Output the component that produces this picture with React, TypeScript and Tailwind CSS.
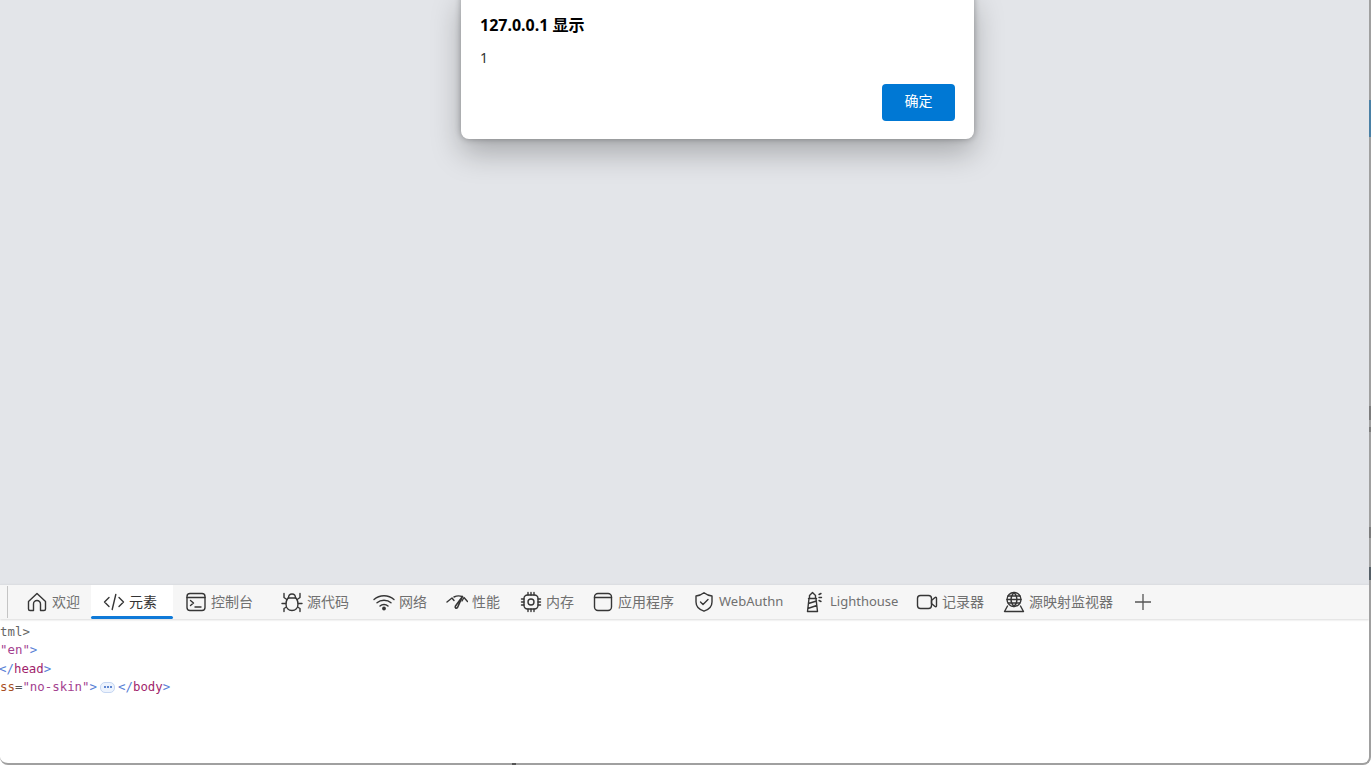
import type { ReactNode } from 'react';

const ink = { fill: 'none', stroke: '#363636', strokeWidth: 1.4, strokeLinecap: 'round', strokeLinejoin: 'round' } as const;

function Icon({ children }: { children: ReactNode }) {
  return (
    <svg width="22" height="22" viewBox="0 0 22 22" className="shrink-0" {...ink}>
      {children}
    </svg>
  );
}

const tabs = [
  {
    label: '欢迎',
    width: 'w-[77px]',
    icon: <path d="M2.500 10.500 11 2.500l8.500 8V18a1.500 1.500 0 0 1-1.500 1.500h-3.500V13a3.500 3.500 0 0 0-7 0v6.500H4A1.500 1.500 0 0 1 2.500 18z" />,
  },
  {
    label: '元素',
    width: 'w-[82px]',
    active: true,
    icon: <path d="M6 6.500 1.500 11 6 15.500M16 6.500l4.500 4.500L16 15.500M12.800 3.500l-3.600 15" />,
  },
  {
    label: '控制台',
    width: 'w-[96px]',
    icon: (
      <>
        <rect x="2" y="2.500" width="18" height="17" rx="3" />
        <path d="M2 6.500h18M5.500 9.500l3 2.500-3 2.500M10 16h6" />
      </>
    ),
  },
  {
    label: '源代码',
    width: 'w-[92px]',
    icon: (
      <>
        <path d="M7 7h8c1.500 2 2 4 2 6 0 4-2.500 6.500-6 6.500S5 17 5 13c0-2 .5-4 2-6z" />
        <path d="M7.500 7C7.500 4.500 9 3 11 3s3.500 1.500 3.500 4M5.800 8.500 3 6.500V2.500M16.200 8.500 19 6.500V2.500M4.800 12.500H1M17.200 12.500H21M5.500 16 3 17.500v3M16.500 16l2.500 1.500v3" />
      </>
    ),
  },
  {
    label: '网络',
    width: 'w-[73px]',
    icon: (
      <>
        <path d="M1 8.500c5.500-5 14.500-5 20 0M4 11.800c3.800-3.500 10.200-3.500 14 0M7 15c2.200-2 5.800-2 8 0" />
        <circle cx="11" cy="17.500" r="1.200" fill="#363636" />
      </>
    ),
  },
  {
    label: '性能',
    width: 'w-[74px]',
    icon: (
      <>
        <path d="M1 11 6 7l2 2.500M8 6c3-1.500 5.500-1.500 8-.5M16 10l2-3.500 3.500 4" />
        <path d="M16.500 5.500 9.500 15c-1 1.800.8 3 2 1.500z" strokeWidth="1.600" />
      </>
    ),
  },
  {
    label: '内存',
    width: 'w-[72px]',
    icon: (
      <>
        <rect x="4" y="4" width="14" height="14" rx="3.500" />
        <circle cx="11" cy="11" r="3" />
        <path d="M8 1.500V4M11 1.500V4M14 1.500V4M8 18v2.500M11 18v2.500M14 18v2.500M1.500 8H4M1.500 11H4M1.500 14H4M18 8h2.500M18 11h2.500M18 14h2.500" />
      </>
    ),
  },
  {
    label: '应用程序',
    width: 'w-[101px]',
    icon: (
      <>
        <rect x="2.500" y="2.500" width="17" height="17" rx="3.500" />
        <path d="M2.500 6.500h17" />
      </>
    ),
  },
  {
    label: 'WebAuthn',
    width: 'w-[111px]',
    latin: true,
    icon: <path d="M11 1.800c2.500 2 5 3 8 3.200v6c0 4.500-3 7.500-8 9.200-5-1.700-8-4.700-8-9.200V5c3-.2 5.500-1.200 8-3.200zM7.500 11l2.500 2.500 5-5" />,
  },
  {
    label: 'Lighthouse',
    width: 'w-[112px]',
    latin: true,
    icon: <path d="M8.500 1.500 5.500 4.500v3h6v-3zM4.500 7.500h8M5 7.500l-1.500 13h10l-1.500-13M4.500 12.500l8-2.500M3.800 17.500l9-3M15 3.500l2-1M15 6.500h2.500M15 9.500l2 1" />,
  },
  {
    label: '记录器',
    width: 'w-[87px]',
    icon: (
      <>
        <rect x="1.500" y="4.500" width="14" height="13" rx="3" />
        <path d="m15.500 9.500 3.500-3c.8-.5 1.500 0 1.500.8v7.400c0 .8-.7 1.300-1.500.8l-3.500-3z" />
      </>
    ),
  },
  {
    label: '源映射监视器',
    width: 'w-[131px]',
    icon: (
      <>
        <circle cx="11" cy="8.500" r="7" />
        <path d="M4 8.500h14M11 1.500c-4 4-4 10 0 14M11 1.500c4 4 4 10 0 14M5 5h12M5 12h12M4.500 15 1.500 20.500h19L17.500 15" />
      </>
    ),
  },
];

export default function App() {
  return (
    <div className="relative h-screen w-full overflow-hidden bg-white font-['Noto_Sans','Noto_Sans_CJK_SC',sans-serif]">
      <div className="flex h-full flex-col overflow-hidden rounded-b-lg border-r-2 border-b-2 border-[#a0a0a0]">
        <div className="h-[584px] shrink-0 bg-[#e3e5e9]" />

        {/* DevTools tab strip */}
        <div className="flex h-[35px] shrink-0 items-center border-t border-[#dcdee2] bg-[#f6f6f6] pl-[7px] shadow-[0_1px_2px_rgba(0,0,0,0.15)]">
          <div className="mr-[5px] h-[32px] w-px bg-[#c4c4c4]" />
          <div className="w-px" />
          {tabs.map((tab) => (
            <div
              key={tab.label}
              className={`relative flex h-full shrink-0 items-center gap-[4px] pl-[12px] ${tab.latin ? 'text-[13px]' : 'text-[14px]'} ${tab.width} ${
                tab.active ? 'bg-white text-[#333333]' : 'text-[#707070]'
              }`}
            >
              <Icon>{tab.icon}</Icon>
              <span className={tab.latin ? 'whitespace-nowrap' : 'whitespace-nowrap pb-[2px]'}>{tab.label}</span>
              {tab.active && <div className="absolute right-0 bottom-0 left-0 h-[3px] rounded-full bg-[#0f7ad8]" />}
            </div>
          ))}
          <svg width="18" height="18" viewBox="0 0 18 18" className="ml-[12px]" fill="none" stroke="#555555" strokeWidth="1.300">
            <path d="M9 1v16M1 9h16" />
          </svg>
        </div>

        {/* Elements tree */}
        <div className="flex-1 pt-[4px] font-['DejaVu_Sans_Mono',monospace] text-[12.400px] leading-[18.300px]">
          <div className="text-[#666666]">tml&gt;</div>
          <div>
            <span className="text-[#a3418f]">"en"</span>
            <span className="text-[#5a7fd6]">&gt;</span>
          </div>
          <div className="-ml-px text-[#a11f6c]">
            <span className="text-[#5a7fd6]">&lt;/</span>head<span className="text-[#5a7fd6]">&gt;</span>
          </div>
          <div className="flex items-center whitespace-pre">
            <span className="text-[#a8501f]">ss</span>
            <span className="text-[#555555]">=</span>
            <span className="text-[#a3418f]">"no-skin"</span>
            <span className="text-[#5a7fd6]">&gt;</span>
            <span className="mx-[3px] flex h-[11px] w-[15px] items-center justify-center gap-px rounded-[5px] border border-[#c5d6f2] bg-[#edf3fd]">
              <span className="h-[2px] w-[2px] rounded-full bg-[#2f62c0]" />
              <span className="h-[2px] w-[2px] rounded-full bg-[#2f62c0]" />
              <span className="h-[2px] w-[2px] rounded-full bg-[#2f62c0]" />
            </span>
            <span className="text-[#5a7fd6]">&lt;/</span>
            <span className="text-[#a11f6c]">body</span>
            <span className="text-[#5a7fd6]">&gt;</span>
          </div>
        </div>
      </div>

      {/* alert dialog */}
      <div className="absolute top-[-10px] left-[461px] flex h-[149px] w-[513px] flex-col rounded-lg bg-white px-[19px] pt-[25px] shadow-[0_14px_30px_rgba(0,0,0,0.26),0_0_6px_rgba(0,0,0,0.3)]">
        <div className="text-[16px] leading-[20px] font-bold text-black">127.0.0.1 显示</div>
        <div className="mt-[13px] text-[14px] leading-[20px] text-[#333333]">1</div>
        <div className="mt-[16px] flex justify-end">
          <button className="flex h-[37px] w-[73px] items-center justify-center rounded-[4px] bg-[#0078d4] pb-[4px] text-[14px] text-white">确定</button>
        </div>
      </div>

      {/* window edge behind the browser */}
      <div className="absolute top-[100px] right-0 h-[37px] w-[2px] bg-[#4a80a5]" />
      <div className="absolute top-[406px] right-0 h-[14px] w-[2px] bg-[#7c7c7c]" />
      <div className="absolute top-[427px] right-0 h-[5px] w-[2px] bg-[#7c7c7c]" />
      <div className="absolute top-[527px] right-0 h-[11px] w-[2px] bg-[#7c7c7c]" />
      <div className="absolute top-[567px] right-0 h-[13px] w-[2px] bg-[#555f66]" />
      <div className="absolute right-[855px] bottom-0 h-[2px] w-[4px] bg-[#555555]" />
    </div>
  );
}
